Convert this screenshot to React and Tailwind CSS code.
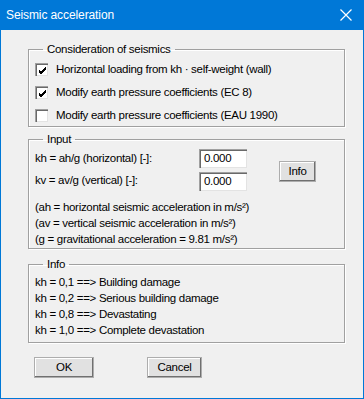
import React from 'react';

const font = { fontFamily: '"Liberation Sans", Arial, sans-serif' };

function Check({ checked }) {
  return (
    <span className="inline-flex w-[13px] h-[13px] bg-white border-t border-l border-[#a0a0a0] border-r-white border-b-white shadow-[inset_1px_1px_0_#696969,inset_-1px_-1px_0_#e3e3e3] items-center justify-center shrink-0">
      {checked && (
        <svg width="9" height="9" viewBox="0 0 9 9">
          <path d="M1 4 L3 6 L8 1 M1 5 L3 7 L8 2 M1 6 L3 8 L8 3" stroke="#000" strokeWidth="1" fill="none" shapeRendering="crispEdges" />
        </svg>
      )}
    </span>
  );
}

function Group({ title, className, children }) {
  return (
    <fieldset className={`border border-[#a0a0a0] shadow-[inset_1px_1px_0_#fff,1px_1px_0_#fff] ${className}`}>
      <legend className="ml-[8px] px-[4px] text-[11.5px] tracking-[-0.3px] leading-[15px] text-black">{title}</legend>
      {children}
    </fieldset>
  );
}

function Btn({ children, className }) {
  return (
    <button className={`h-[21px] bg-[#e1e1e1] border border-[#adadad] shadow-[inset_-1px_-1px_0_#707070,inset_1px_1px_0_#fff] text-[11.5px] text-black ${className}`}>
      {children}
    </button>
  );
}

function Field({ value }) {
  return (
    <div className="w-[48px] h-[19px] bg-white border-t border-l border-[#a0a0a0] border-r-white border-b-white shadow-[inset_1px_1px_0_#696969,inset_-1px_-1px_0_#e3e3e3] text-[11.5px] leading-[17px] pl-[4px]">
      {value}
    </div>
  );
}

export default function App() {
  const checks = [
    ['Horizontal loading from kh · self-weight (wall)', true],
    ['Modify earth pressure coefficients (EC 8)', true],
    ['Modify earth pressure coefficients (EAU 1990)', false],
  ];
  const info = [
    'kh = 0,1 ==> Building damage',
    'kh = 0,2 ==> Serious building damage',
    'kh = 0,8 ==> Devastating',
    'kh = 1,0 ==> Complete devastation',
  ];
  return (
    <div style={font} className="w-[364px] h-[399px] flex flex-col bg-[#0078d7] text-black">
      <div className="h-[30px] flex items-center justify-between pl-[6px] pr-[12px] text-white">
        <span className="text-[12px] tracking-[-0.1px]">Seismic acceleration</span>
        <svg width="12" height="12" viewBox="0 0 12 12">
          <path d="M0.5 0.5 L11.5 11.5 M11.5 0.5 L0.5 11.5" stroke="#fff" strokeWidth="1.2" />
        </svg>
      </div>
      <div className="flex-1 mx-[1px] mb-[1px] bg-[#f0f0f0] pl-[27px] pr-[18px] pt-[12px] flex flex-col text-[11.5px] tracking-[-0.3px]">
        <Group title="Consideration of seismics" className="h-[85px] pl-[6px] pt-[1px]">
          {checks.map(([t, c]) => (
            <div key={t} className="flex items-center h-[23px] gap-[8px]">
              <Check checked={c} />
              <span>{t}</span>
            </div>
          ))}
        </Group>
        <Group title="Input" className="mt-[5px] h-[117px] pl-[6px] pr-[28px]">
          <div className="flex items-start">
            <div className="flex-1">
              <div className="flex items-center h-[22px] pt-[1px]">
                <span className="flex-1">kh = ah/g (horizontal) [-]:</span>
                <Field value="0.000" />
              </div>
              <div className="flex items-center h-[22px] mt-[1px]">
                <span className="flex-1">kv = av/g (vertical) [-]:</span>
                <Field value="0.000" />
              </div>
            </div>
            <Btn className="w-[37px] ml-[32px] mt-[14px]">Info</Btn>
          </div>
          <div className="leading-[16px] mt-[7px]">
            <div>(ah = horizontal seismic acceleration in m/s²)</div>
            <div>(av = vertical seismic acceleration in m/s²)</div>
            <div>(g = gravitational acceleration = 9.81 m/s²)</div>
          </div>
        </Group>
        <Group title="Info" className="mt-[8px] h-[86px] pl-[6px]">
          <div className="leading-[16px] pt-[2px]">
            {info.map((t) => (
              <div key={t}>{t}</div>
            ))}
          </div>
        </Group>
        <div className="flex mt-[14px] pl-[6px] gap-[53px]">
          <Btn className="w-[60px]">OK</Btn>
          <Btn className="w-[55px]">Cancel</Btn>
        </div>
      </div>
    </div>
  );
}
